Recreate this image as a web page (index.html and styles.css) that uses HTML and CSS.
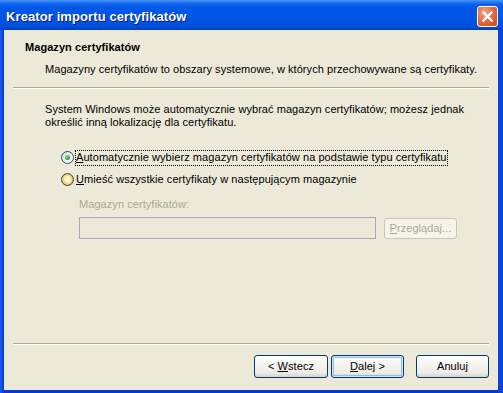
FILE: index.html
```html
<!DOCTYPE html>
<html lang="pl">
<head>
<meta charset="utf-8">
<title>Kreator importu certyfikatów</title>
<link rel="stylesheet" href="styles.css">
</head>
<body>
<div class="window">
  <div class="titlebar">
    <span class="title">Kreator importu certyfikatów</span>
    <span class="close">
      <svg width="13" height="13" viewBox="0 0 13 13"><path d="M2.5 2.5 L10.5 10.5 M10.5 2.5 L2.5 10.5" stroke="#fff" stroke-width="2.4" stroke-linecap="square"/></svg>
    </span>
  </div>
  <div class="frame">
    <div class="client">
      <div class="header">
        <div class="h-title">Magazyn certyfikatów</div>
        <div class="h-sub">Magazyny certyfikatów to obszary systemowe, w których przechowywane są certyfikaty.</div>
      </div>
      <div class="sep"></div>
      <div class="body">
        <p class="intro">System Windows może automatycznie wybrać magazyn certyfikatów; możesz jednak<br>określić inną lokalizację dla certyfikatu.</p>
        <div class="options">
          <div class="radio-row"><span class="radio checked"><span class="dot"></span></span><span class="label focus"><u>A</u>utomatycznie wybierz magazyn certyfikatów na podstawie typu certyfikatu</span></div>
          <div class="radio-row"><span class="radio hot"></span><span class="label"><u>U</u>mieść wszystkie certyfikaty w następującym magazynie</span></div>
        </div>
        <div class="store">
          <div class="store-label">Magazyn certyfikatów:</div>
          <div class="store-row">
            <div class="field"></div>
            <span class="btn btn-disabled"><u>P</u>rzeglądaj...</span>
          </div>
        </div>
      </div>
      <div class="sep"></div>
      <div class="buttons">
        <span class="btn btn-back">&lt;&nbsp;<u>W</u>stecz</span>
        <span class="btn btn-next"><u>D</u>alej&nbsp;&gt;</span>
        <span class="btn btn-cancel">Anuluj</span>
      </div>
    </div>
  </div>
</div>
</body>
</html>
```

FILE: styles.css
```css
* { box-sizing: border-box; }
html, body { margin: 0; padding: 0; }
body {
  width: 503px;
  height: 393px;
  overflow: hidden;
  font-family: "Liberation Sans", Arial, sans-serif;
  font-size: 11px;
  line-height: 13px;
  letter-spacing: 0.06px;
  color: #000;
  background: #0831d9;
}
.window {
  width: 503px;
  height: 393px;
  display: flex;
  flex-direction: column;
}
.titlebar {
  height: 30px;
  flex: none;
  display: flex;
  align-items: flex-start;
  justify-content: space-between;
  padding-left: 6px;
  background: linear-gradient(to bottom, #4a96f8 0px, #2a78f4 2px, #0e62ec 4px, #0058e8 8px, #0055e5 15px, #0053e2 22px, #004fdc 26px, #0046c8 29px, #003db8 30px);
}
.title {
  margin-top: 9px;
  color: #fff;
  font-family: "Liberation Sans", Arial, sans-serif;
  font-weight: bold;
  font-size: 13px;
  line-height: 15px;
  letter-spacing: 0.1px;
  text-shadow: 1px 1px 0 #0a1883;
}
.close {
  width: 21px;
  height: 21px;
  margin-top: 6px;
  margin-right: 5px;
  border: 1px solid #fff;
  border-radius: 3px;
  background: radial-gradient(circle at 35% 30%, #f4a88c 0%, #e66c45 45%, #d2441c 100%);
  display: flex;
  align-items: center;
  justify-content: center;
}
.close svg { display: block; }
.frame {
  flex: 1;
  display: flex;
  padding: 0 5px 3px 4px;
  background: linear-gradient(to right, #0a49e2 0, #1b68f0 1px, #0a49e2 2px, #0838d2 4px, #0838d2 calc(100% - 5px), #0a4ade calc(100% - 3px), #0a3fd6 100%);
}
.client {
  flex: 1;
  background: #ece9d8;
  display: flex;
  flex-direction: column;
}
.header {
  height: 57px;
  flex: none;
  padding-top: 11px;
}
.h-title {
  padding-left: 21px;
  font-weight: bold;
}
.h-sub {
  margin-top: 9px;
  padding-left: 41px;
}
.sep {
  height: 2px;
  flex: none;
  margin: 0 9px;
  border-top: 1px solid #aca899;
  border-bottom: 1px solid #fff;
}
.body {
  flex: 1;
  padding-top: 14px;
}
.intro {
  margin: 0;
  padding-left: 41px;
}
.options {
  margin-top: 22px;
  padding-left: 57px;
  display: flex;
  flex-direction: column;
  gap: 9px;
}
.radio-row {
  display: flex;
  align-items: center;
  height: 13px;
}
.radio {
  width: 13px;
  height: 13px;
  flex: none;
  border-radius: 50%;
  border: 1px solid #1c5180;
  background: linear-gradient(135deg, #dcd9ce 0%, #f2f1ec 50%, #ffffff 100%);
  display: flex;
  align-items: center;
  justify-content: center;
}
.radio.hot {
  background: radial-gradient(circle, #fffdf4 0, #fef6d2 2.5px, #fcd979 4px, #f8b636 5.5px);
}
.radio .dot {
  width: 5px;
  height: 5px;
  border-radius: 50%;
  background: radial-gradient(circle at 40% 35%, #8ee68e 0%, #31a631 60%, #1b8a1b 100%);
}
.label {
  margin-left: 1px;
  padding: 1px 1px 2px 1px;
  white-space: nowrap;
}
.label.focus {
  outline: 1px dotted #000;
  outline-offset: -1px;
}
.store {
  margin-top: 12px;
  padding-left: 75px;
}
.store-label {
  color: #aca899;
}
.store-row {
  margin-top: 6px;
  display: flex;
  align-items: flex-start;
  gap: 8px;
}
.field {
  width: 297px;
  height: 22px;
  border: 1px solid #a5acb5;
  background: #ece9d8;
}
.btn {
  display: flex;
  align-items: center;
  justify-content: center;
  height: 23px;
  border: 1px solid #003c74;
  border-radius: 3px;
  background: linear-gradient(to bottom, #ffffff 0%, #f6f5f0 40%, #ecebe4 80%, #d9d4c8 100%);
  color: #000;
  white-space: nowrap;
  padding-bottom: 1px;
}
.btn-disabled {
  width: 73px;
  height: 21px;
  margin-top: 1px;
  border-color: #c9c7ba;
  background: #f5f4ea;
  color: #aca899;
}
.buttons {
  height: 45px;
  flex: none;
  display: flex;
  justify-content: flex-end;
  align-items: flex-start;
  padding: 10px 9px 0 0;
}
.btn-back { width: 74px; }
.btn-next {
  width: 73px;
  margin-left: 3px;
  box-shadow: inset 0 0 0 1px #cee7ff, inset 0 0 0 2px #98b8ea;
}
.btn-cancel { width: 73px; margin-left: 12px; }
```
